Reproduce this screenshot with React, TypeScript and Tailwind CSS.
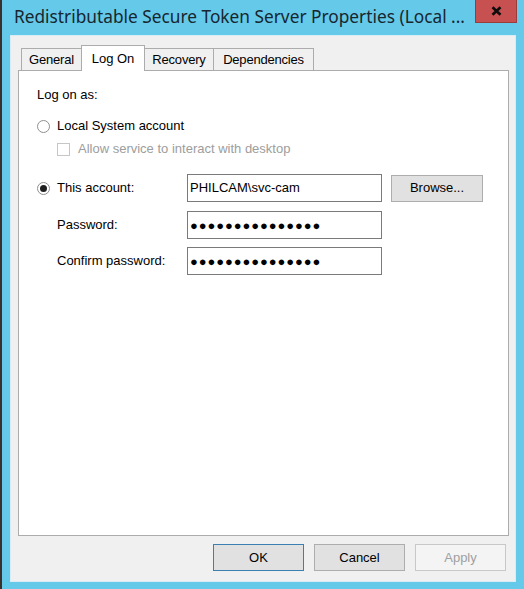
import React from 'react';

const font = { fontFamily: '"Liberation Sans", Arial, sans-serif' };

const Radio: React.FC<{ checked?: boolean }> = ({ checked }) => (
  <span className="w-[13px] h-[13px] rounded-full border border-[#8f8f8f] bg-white flex items-center justify-center shrink-0">
    {checked && <span className="w-[7px] h-[7px] rounded-full bg-[#1f1f1f]" />}
  </span>
);

const Tab: React.FC<{ label: string; width: string; active?: boolean }> = ({ label, width, active }) =>
  active ? (
    <div className={`${width} h-[26px] -ml-px relative z-10 bg-white border border-b-0 border-[#acacac] flex items-start justify-center pt-[3px] text-[13px] text-black`}>
      {label}
    </div>
  ) : (
    <div className={`${width} h-[23px] -ml-px bg-[#f0f0f0] border border-[#acacac] flex items-center justify-center text-[13px] text-black tracking-[-0.2px]`}>
      {label}
    </div>
  );

const Button: React.FC<{ label: string; kind?: 'default' | 'normal' | 'disabled' }> = ({ label, kind = 'normal' }) => {
  const styles =
    kind === 'default'
      ? 'bg-[#e1e1e1] border-[#3c7fb1] text-black'
      : kind === 'disabled'
      ? 'bg-[#f4f4f4] border-[#c8c8c8] text-[#a0a0a0]'
      : 'bg-[#e1e1e1] border-[#adadad] text-black';
  return (
    <div className={`w-[91px] h-[27px] border flex items-center justify-center text-[13px] ${styles}`}>
      {label}
    </div>
  );
};

const Field: React.FC<{ value: string; secret?: boolean }> = ({ value, secret }) => (
  <div className="w-[195px] h-[28px] bg-white border border-[#7a7a7a] flex items-center pl-[2px] text-[13px] text-black">
    {secret ? <span className="text-[13px] tracking-[0.9px] leading-none">{value}</span> : value}
  </div>
);

export default function App() {
  const dots = '●●●●●●●●●●●●●●●';
  return (
    <div className="w-[524px] h-[589px] bg-[#65c9e9] flex overflow-hidden" style={font}>
      <div className="w-[2px] bg-[#3a302c]" />
      <div className="flex-1 flex flex-col">
        {/* title bar */}
        <div className="h-[35px] flex items-start">
          <div className="pl-[12px] pt-[4px] text-[17.3px] text-[#17262f] whitespace-nowrap" style={{ fontFamily: '"Noto Sans", "Open Sans", sans-serif' }}>
            Redistributable Secure Token Server Properties (Local ...
          </div>
          <div className="ml-auto mr-[7px] w-[42px] h-[23px] bg-[#c75050] border border-t-0 border-[#9b3b3b] flex items-center justify-center">
            <svg width="11" height="10" viewBox="0 0 11 10">
              <path d="M1.5 1.2 L9.5 8.8 M9.5 1.2 L1.5 8.8" stroke="#0d0d0d" strokeWidth="2.6" strokeLinecap="butt" />
            </svg>
          </div>
        </div>

        {/* client area */}
        <div className="ml-[8px] mr-[8px] h-[547px] bg-[#f0f0f0] border border-[#d9ecf4] flex flex-col pt-[9px]">
          <div className="ml-[7px] mr-[6px] flex flex-col">
            <div className="h-[26px] flex items-end pl-[4px] -mb-px">
              <Tab label="General" width="w-[61px]" />
              <Tab label="Log On" width="w-[64px]" active />
              <Tab label="Recovery" width="w-[70px]" />
              <Tab label="Dependencies" width="w-[101px]" />
            </div>
            <div className="h-[466px] bg-white border border-[#acacac] pl-[18px] pt-[16px] text-[13px] text-black">
              <div className="h-[16px] leading-[16px]">Log on as:</div>

              <div className="mt-[15px] h-[16px] flex items-center">
                <Radio />
                <span className="ml-[7px]">Local System account</span>
              </div>

              <div className="mt-[7px] h-[16px] flex items-center pl-[20px]">
                <span className="w-[13px] h-[13px] border border-[#c6c6c6] bg-white shrink-0" />
                <span className="ml-[8px] text-[#9d9d9d]">Allow service to interact with desktop</span>
              </div>

              <div className="mt-[17px] flex items-center">
                <Radio checked />
                <span className="ml-[7px] w-[130px]">This account:</span>
                <Field value="PHILCAM\svc-cam" />
                <div className="ml-[9px] w-[92px] h-[27px] bg-[#e1e1e1] border border-[#adadad] flex items-center justify-center">
                  Browse...
                </div>
              </div>

              <div className="mt-[9px] flex items-center pl-[20px]">
                <span className="w-[130px]">Password:</span>
                <Field value={dots} secret />
              </div>

              <div className="mt-[8px] flex items-center pl-[20px]">
                <span className="w-[130px]">Confirm password:</span>
                <Field value={dots} secret />
              </div>
            </div>
          </div>

          <div className="mt-[8px] flex justify-end gap-[10px] pr-[9px]">
            <Button label="OK" kind="default" />
            <Button label="Cancel" />
            <Button label="Apply" kind="disabled" />
          </div>
        </div>
      </div>
    </div>
  );
}
